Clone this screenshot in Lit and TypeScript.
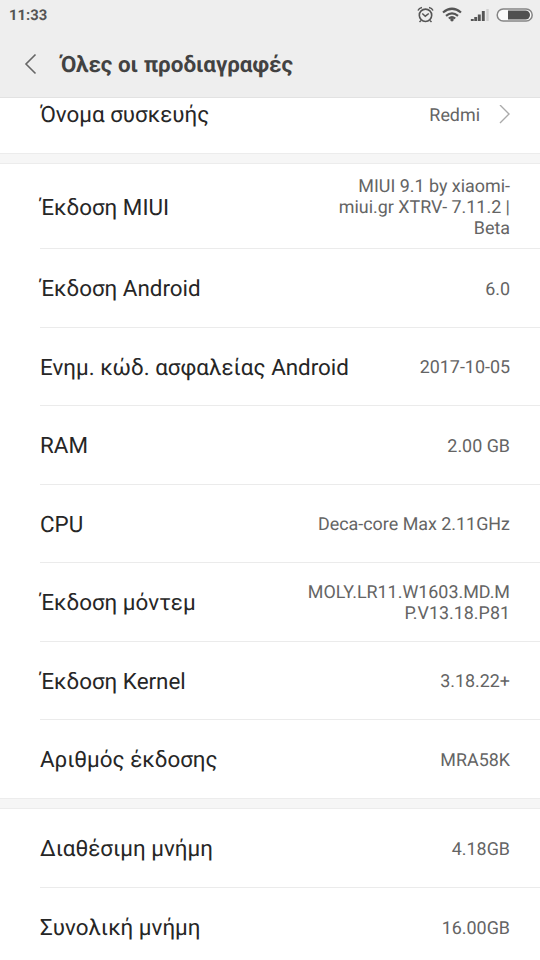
import { LitElement, html, css } from "lit";
import { customElement } from "lit/decorators.js";

interface Spec { label: string; lines: string[]; }
const system: Spec[] = [
  { label: "Έκδοση MIUI", lines: ["MIUI 9.1 by xiaomi-", "miui.gr XTRV- 7.11.2 |", "Beta"] },
  { label: "Έκδοση Android", lines: ["6.0"] },
  { label: "Ενημ. κώδ. ασφαλείας Android", lines: ["2017-10-05"] },
  { label: "RAM", lines: ["2.00 GB"] },
  { label: "CPU", lines: ["Deca-core Max 2.11GHz"] },
  { label: "Έκδοση μόντεμ", lines: ["MOLY.LR11.W1603.MD.M", "P.V13.18.P81"] },
  { label: "Έκδοση Kernel", lines: ["3.18.22+"] },
  { label: "Αριθμός έκδοσης", lines: ["MRA58K"] },
];
const storage: Spec[] = [
  { label: "Διαθέσιμη μνήμη", lines: ["4.18GB"] },
  { label: "Συνολική μνήμη", lines: ["16.00GB"] },
];

@customElement("app-root")
export class AppRoot extends LitElement {
  static styles = css`
    :host { display: flex; flex-direction: column; width: 540px; height: 960px; overflow: hidden; background: #fff; font-family: Roboto, sans-serif; box-sizing: border-box; text-rendering: geometricPrecision; }
    header { flex: none; height: 98px; box-sizing: border-box; background: #eee; border-bottom: 1px solid #e2e2e2; }
    .status { height: 30px; display: flex; align-items: center; justify-content: space-between; padding: 0 6px 0 9px; font-size: 14.8px; font-weight: 700; color: #555; }
    .title { height: 67px; display: flex; align-items: center; gap: 22px; padding: 0 0 0 24px; box-sizing: border-box; }
    h1 { margin: 0; padding: 2px 0 0 0.7px; font-size: 22.4px; font-weight: 700; color: #424242; }
    svg { display: block; }
    .row { height: 78.5px; margin-left: 40px; padding: 2.800px 30px 0 0; display: flex; align-items: center; justify-content: space-between; box-sizing: border-box; border-bottom: 1px solid #ebebeb; flex: none; }
    .row:first-child { height: 85px; padding-top: 3.500px; }
    .storage .row { padding-top: 3.500px; }
    .storage .row:first-child { height: 79px; }
    .row:last-child { height: 77.5px; border-bottom: 0; }
    .name { height: 55px; flex: none; display: flex; justify-content: space-between; padding: 0 29px 21px 40px; align-items: center; box-sizing: border-box; }
    .label { font-size: 22.4px; color: #262626; white-space: nowrap; }
    .accent { padding-left: 0.2px; }
    .value { font-size: 17.9px; line-height: 21px; color: #646464; text-align: right; white-space: nowrap; }
    .link { display: flex; align-items: center; gap: 19px; }
    .gap { height: 11px; flex: none; background: #f6f6f6; border: solid #ececec; border-width: 1px 0; box-sizing: border-box; }
  `;
  label(text: string) {
    return html`<span class="label ${/^[ΈΌ]/.test(text) ? "accent" : ""}">${text}</span>`;
  }
  row(s: Spec) {
    return html`<div class="row">${this.label(s.label)}<div class="value">${s.lines.map(l => html`<div>${l}</div>`)}</div></div>`;
  }
  render() {
    return html`
      <header>
        <div class="status"><span>11:33</span>
          <svg width="118" height="24" viewBox="416 3 118 24" fill="none" stroke="#555">
            <circle cx="425.500" cy="15.300" r="6.200" stroke-width="1.600"/>
            <path d="M418 10.500q1-2.500 4-3M433 10.500q-1-2.500-4-3M422.300 13.500l3 2.700 3.500-2.700M421 20.500l-1.500 1.500M430 20.500l1.500 1.500" stroke-width="1.500"/>
            <path d="M443 12.500q9-7.500 18 0M446 15.800q6-5 12 0M448.800 18.500q3.200-2.500 6.400 0" stroke-width="2.200"/><circle cx="452" cy="19.800" r="1.700" fill="#555" stroke="none"/>
            <path d="M472.300 21v-2M475.700 21v-4M479.300 21v-6.500M483.300 21v-10" stroke-width="2.900"/><path d="M487.500 21V9" stroke="#d0d0d0" stroke-width="2.400"/>
            <rect x="497.200" y="9" width="35" height="12" rx="6" stroke="#858585" stroke-width="1.500" fill="#fafafa"/>
            <path d="M508 10.500h17.500a4.500 4.500 0 0 1 0 9H508z" fill="#505050" stroke="none"/>
          </svg>
        </div>
        <div class="title"><svg width="14" height="22" viewBox="0 0 14 22" fill="none" stroke="#666" stroke-width="1.600"><path d="M11.500 1.500L2 11l9.500 9.500"/></svg><h1>Όλες οι προδιαγραφές</h1></div>
      </header>
      <div class="name">${this.label("Όνομα συσκευής")}<div class="value link">Redmi <svg width="12" height="20" viewBox="0 0 12 20" fill="none" stroke="#aaa" stroke-width="1.400"><path d="M1 0l9 9-9 9"/></svg></div></div>
      <div class="gap"></div>
      <section>${system.map(s => this.row(s))}</section>
      <div class="gap"></div>
      <section class="storage">${storage.map(s => this.row(s))}</section>`;
  }
}
